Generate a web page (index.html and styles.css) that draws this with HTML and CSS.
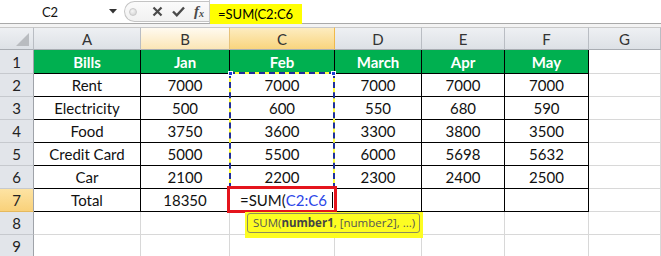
FILE: index.html
```html
<!DOCTYPE html>
<html>
<head>
<meta charset="utf-8">
<link rel="stylesheet" href="styles.css">
</head>
<body>
<div class="page">
  <div class="fbar">
    <div class="namebox">
      <span class="nb-text">C2</span>
      <svg class="nb-arrow" width="8" height="5" viewBox="0 0 8 5"><path d="M0 0H8L4 4.5Z" fill="#333"/></svg>
    </div>
    <div class="btns">
      <span class="grip"></span>
      <svg class="ic ic-x" width="11" height="11" viewBox="0 0 11 11"><path d="M1.5 1.5L9.5 9.5M9.5 1.5L1.5 9.5" stroke="#4a4a4a" stroke-width="2.2"/></svg>
      <svg class="ic ic-ok" width="13" height="11" viewBox="0 0 13 11"><path d="M1 5.5L4.8 9.3L12 1.5" stroke="#4a4a4a" stroke-width="2.4" fill="none"/></svg>
      <span class="ic fx">f<sub>x</sub></span>
    </div>
    <div class="finput"><span class="fhl">=SUM(C2:C6</span></div>
  </div>
  <div class="gap"></div>
  <div class="sheet">
    <div class="hc corner"><span class="tri"></span></div>
    <div class="hc">A</div><div class="hc hl-b">B</div><div class="hc hl-c">C</div><div class="hc">D</div><div class="hc">E</div><div class="hc">F</div><div class="hc">G</div>

    <div class="rh r1">1</div>
    <div class="c t g">Bills</div><div class="c t g">Jan</div><div class="c t g">Feb</div><div class="c t g">March</div><div class="c t g">Apr</div><div class="c t g">May</div><div class="c r1c"></div>

    <div class="rh">2</div>
    <div class="c t">Rent</div><div class="c t">7000</div><div class="c t">7000</div><div class="c t">7000</div><div class="c t">7000</div><div class="c t">7000</div><div class="c"></div>

    <div class="rh">3</div>
    <div class="c t">Electricity</div><div class="c t">500</div><div class="c t">600</div><div class="c t">550</div><div class="c t">680</div><div class="c t">590</div><div class="c"></div>

    <div class="rh">4</div>
    <div class="c t">Food</div><div class="c t">3750</div><div class="c t">3600</div><div class="c t">3300</div><div class="c t">3800</div><div class="c t">3500</div><div class="c"></div>

    <div class="rh">5</div>
    <div class="c t">Credit Card</div><div class="c t">5000</div><div class="c t">5500</div><div class="c t">6000</div><div class="c t">5698</div><div class="c t">5632</div><div class="c"></div>

    <div class="rh">6</div>
    <div class="c t">Car</div><div class="c t">2100</div><div class="c t">2200</div><div class="c t">2300</div><div class="c t">2400</div><div class="c t">2500</div><div class="c"></div>

    <div class="rh hl-r">7</div>
    <div class="c t">Total</div><div class="c t">18350</div><div class="c t edit">=SUM(<span class="ref">C2:C6</span><span class="caret"></span></div><div class="c t"></div><div class="c t"></div><div class="c t"></div><div class="c"></div>

    <div class="rh">8</div>
    <div class="c"></div><div class="c"></div><div class="c"></div><div class="c"></div><div class="c"></div><div class="c"></div><div class="c"></div>

    <div class="rh">9</div>
    <div class="c"></div><div class="c"></div><div class="c"></div><div class="c"></div><div class="c"></div><div class="c"></div><div class="c"></div>
  </div>

  <div class="ants"><span class="hnd h1"></span><span class="hnd h2"></span></div>
  <div class="redbox"></div>
  <div class="tipwrap"><div class="tip">SUM(<b>number1</b>, [number2], ...)</div></div>
</div>
</body>
</html>
```

FILE: styles.css
```css
* { box-sizing: border-box; }
html, body { margin: 0; padding: 0; background: #fff; }
body { width: 661px; height: 256px; overflow: hidden; font-family: Lato, "Liberation Sans", sans-serif; }
.page { position: relative; width: 661px; height: 256px; overflow: hidden; }

.fbar { display: flex; height: 24px; border-bottom: 1px solid #a9a9a9; background: #fff; }
.namebox { width: 124px; display: flex; align-items: center; position: relative; }
.nb-text { width: 100px; text-align: center; font-size: 13px; color: #111; }
.nb-arrow { margin-left: 9px; }
.btns { width: 85px; height: 21px; margin-top: 1px; border: 1px solid #c4c4c4; border-right: none; border-radius: 11px 0 0 11px; display: flex; align-items: center; background: linear-gradient(#fbfbfb, #f1f1f1); }
.grip { width: 8px; height: 8px; border-radius: 50%; margin-left: 4px; background: radial-gradient(circle at 40% 35%, #f6f6f6, #cfcfcf); border: 1px solid #c9c9c9; }
.ic { display: block; }
.ic-x { margin-left: 15px; }
.ic-ok { margin-left: 9px; }
.fx { margin-left: 9px; font-family: "Liberation Serif", serif; font-style: italic; font-weight: bold; font-size: 15px; color: #4a4a4a; line-height: 1; }
.fx sub { font-size: 10px; vertical-align: -1px; }
.finput { flex: 1; border-left: 1px solid #c9c9c9; padding-top: 3px; padding-left: 0; }
.fhl { display: inline-block; background: #ffff00; height: 20px; width: 92px; padding-left: 8px; font-size: 13px; line-height: 20px; color: #000; }

.gap { height: 3px; background: #f3f3f3; }

.sheet { display: grid; grid-template-columns: 34px 107px 89px 105px 87px 83px 84px 72px; grid-template-rows: 23px 24px repeat(8, 23px); }
.hc { background: linear-gradient(#eef0f3, #dde1e6); border-top: 1px solid #c8c8c8; border-right: 1px solid #b9bdc3; border-bottom: 1px solid #a9adb3; display: flex; align-items: center; justify-content: center; font-size: 15px; color: #333; }
.corner { position: relative; }
.tri { position: absolute; right: 4px; bottom: 3px; width: 0; height: 0; border-left: 13px solid transparent; border-bottom: 13px solid #b9bcc0; }
.hl-b { background: linear-gradient(#fffaf0, #fbe6b6); border-right-color: #e7c27a; }
.hl-c { background: linear-gradient(#fdecc0, #f9d57e); border-right-color: #f0b94a; }
.rh { background: #e2e5ea; border-right: 1px solid #9fa3a9; border-bottom: 1px solid #c6c9ce; display: flex; align-items: center; justify-content: center; font-size: 15px; color: #222; }
.hl-r { background: linear-gradient(#fde3a3, #f9d17a); border-bottom-color: #e5b95e; }
.c { border-right: 1px solid #d8d8d8; border-bottom: 1px solid #d8d8d8; display: flex; align-items: center; justify-content: center; font-size: 15px; color: #111; }
.c.t { border-right-color: #000; border-bottom-color: #000; }
.c.g { background: #00b050; color: #fff; font-weight: bold; }
.r1c { border-bottom-color: #d8d8d8; }
.edit { justify-content: flex-start; padding-left: 10px; position: relative; }
.ref { color: #2b46e8; }
.caret { display: inline-block; width: 1px; height: 16px; background: #000; margin-left: 5px; }

.ants { position: absolute; left: 229px; top: 72px; width: 106px; height: 117px; border: 2px solid #ffff40; }
.ants::after { content: ""; position: absolute; inset: -2px; border: 2px dashed #1f2f9a; }
.hnd { position: absolute; width: 5px; height: 5px; background: #1a3cd8; border: 1px solid #fff; top: -3px; z-index: 2; }
.h1 { left: -3px; }
.h2 { right: -3px; }
.redbox { position: absolute; left: 227px; top: 186px; width: 110px; height: 27px; border: 3px solid #e4141c; }
.tipwrap { position: absolute; left: 245px; top: 212px; width: 178px; height: 26px; background: #fdfd22; padding: 1px 3px 0 2px; }
.tip { height: 20px; border: 1px solid #8d8d5a; border-radius: 3px; font-family: "Open Sans", sans-serif; font-size: 11.5px; line-height: 18px; color: #555; padding-left: 5px; white-space: nowrap; }
.tip b { color: #444; }
```
